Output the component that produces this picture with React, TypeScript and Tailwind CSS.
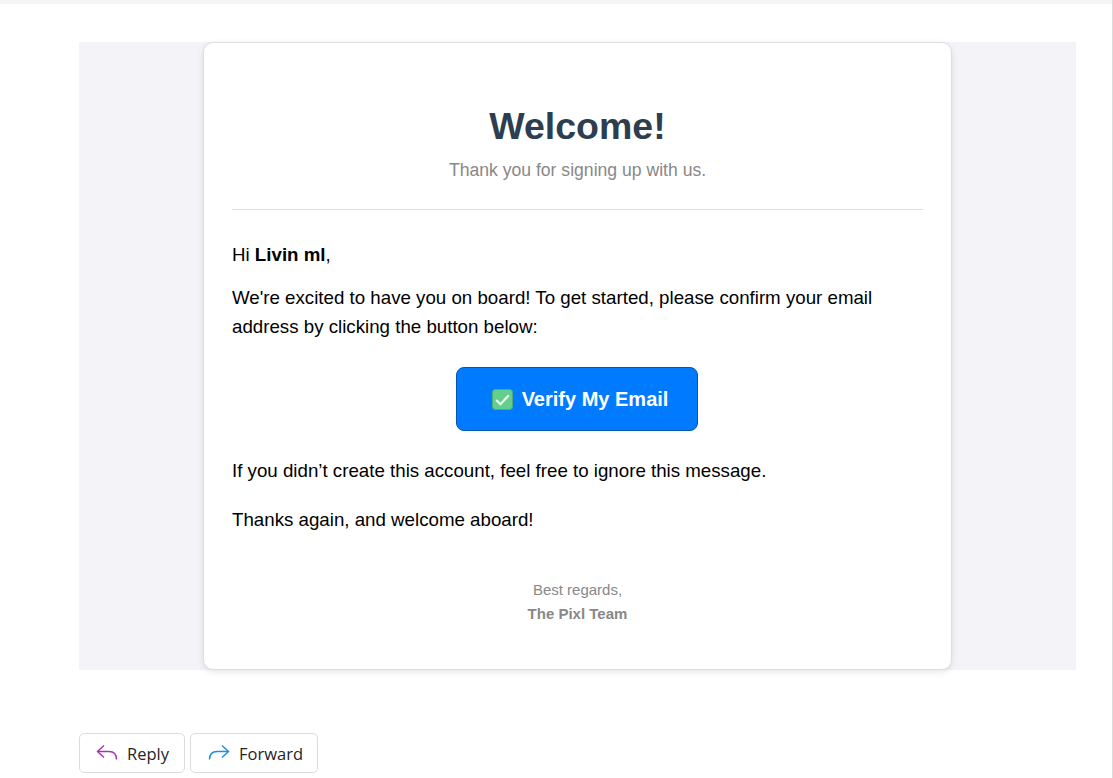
export default function App() {
  return (
    <div className="h-[778px] w-[1113px] overflow-hidden bg-white font-['Liberation_Sans',sans-serif] border-r border-[#dcdcdc] text-black">
      <div className="h-1 bg-[#f5f5f5]" />
      <div className="pl-[79px] pr-[36px] pt-[38px]">
        <div className="flex h-[628px] bg-[#f4f4f8] pl-[124px]">
          <div className="h-[628px] w-[749px] shrink-0 rounded-[10px] border border-[#dedede] bg-white px-[28px] shadow-[0_2px_6px_rgba(0,0,0,0.1)]">
            <div className="border-b border-[#dddddd] pb-[24px] pt-[56px] text-center">
              <h1 className="text-[37.5px] font-bold leading-[54px] text-[#2c3e50]">Welcome!</h1>
              <p className="mt-[3px] text-[17.6px] leading-[29px] text-[#888888]">Thank you for signing up with us.</p>
            </div>
            <p className="mt-[30px] text-[18.72px] leading-[29px]">Hi <b>Livin ml</b>,</p>
            <p className="mt-[14px] text-[18.72px] leading-[29px]">We're excited to have you on board! To get started, please confirm your email address by clicking the button below:</p>
            <div className="mt-[26px] flex justify-center pr-px">
              <div className="flex h-[64px] w-[242px] items-center justify-center gap-[9px] rounded-[8px] border border-[#0056b3] bg-[#007bff] pl-[6px] text-[20px] font-bold text-white">
                <svg width="21" height="21" viewBox="0 0 20 20" aria-hidden="true">
                  <rect x="0.5" y="0.5" width="19" height="19" rx="3" fill="#62cf8c" stroke="#4fae78" />
                  <path d="M4 10.5 8 14.5 16 6" fill="none" stroke="#f0fff6" strokeWidth="2" />
                </svg>
                <span>Verify My Email</span>
              </div>
            </div>
            <p className="mt-[25px] text-[18.72px] leading-[29px]">If you didn’t create this account, feel free to ignore this message.</p>
            <p className="mt-[20px] text-[18.72px] leading-[29px]">Thanks again, and welcome aboard!</p>
            <div className="mt-[44px] text-center text-[15px] leading-[24px] text-[#888888]">
              <p>Best regards,</p>
              <p className="font-bold">The Pixl Team</p>
            </div>
          </div>
        </div>
        <div className="mt-[63px] flex gap-[5px] font-['Open_Sans',sans-serif] text-[16.5px] text-[#242424]">
          <div className="flex h-[40px] w-[106px] items-center gap-[9px] rounded-[5px] border border-[#dcdcdc] bg-white pl-[16px]">
            <svg width="22" height="18" viewBox="0 0 22 18" fill="none" stroke="#a832b4" strokeWidth="1.4" aria-hidden="true">
              <path d="M8 1.5 1.5 7.5 8 13.5" />
              <path d="M1.5 7.5H13C17.5 7.5 20.5 10 20.5 15.5" />
            </svg>
            <span className="relative top-px">Reply</span>
          </div>
          <div className="flex h-[40px] w-[128px] items-center gap-[9px] rounded-[5px] border border-[#dcdcdc] bg-white pl-[17px]">
            <svg width="22" height="18" viewBox="0 0 22 18" fill="none" stroke="#1a8fe3" strokeWidth="1.4" aria-hidden="true">
              <path d="M14 1.5 20.5 7.5 14 13.5" />
              <path d="M20.5 7.5H9C4.5 7.5 1.5 10 1.5 15.5" />
            </svg>
            <span className="relative top-px">Forward</span>
          </div>
        </div>
      </div>
    </div>
  );
}
